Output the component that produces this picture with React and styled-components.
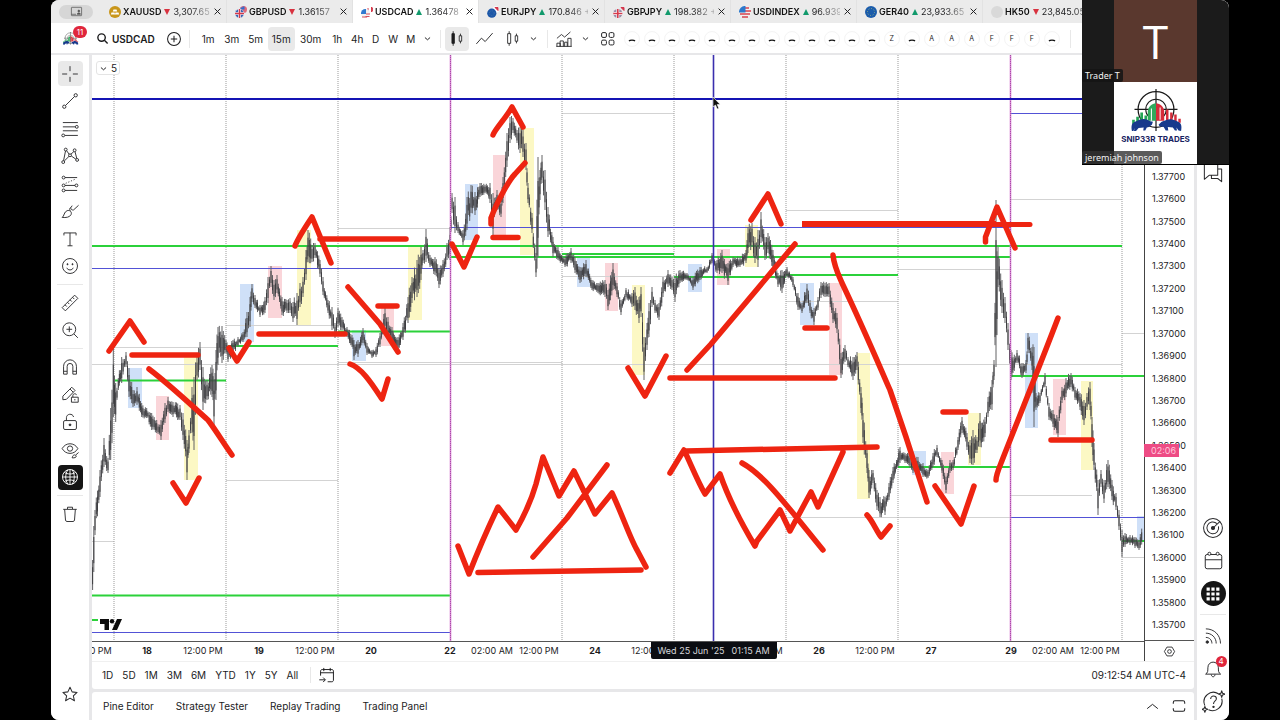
import React from "react";
import styled, { createGlobalStyle, css } from "styled-components";

const GlobalStyle = createGlobalStyle`
  *, *::before, *::after { box-sizing: border-box; }
  html, body { margin: 0; background: #000; }
  body { font-family: Inter, "Liberation Sans", sans-serif; font-size: 10px; color: #1c1c1e; }
  button { font: inherit; color: inherit; border: 0; padding: 0; background: none; cursor: pointer; }
  svg { display: block; flex: none; }
`;

const Screen = styled.div`
  min-height: 100vh;
  padding: 0 51px;
  display: flex;
`;

const Window = styled.main`
  position: relative;
  flex: 1;
  min-width: 0;
  display: flex;
  flex-direction: column;
  background: #e7e7e9;
  border-radius: 8px;
  overflow: hidden;
`;

/* ---------- symbol tabs ---------- */

const TabStrip = styled.nav`
  display: flex;
  align-items: center;
  height: 23px;
  background: #ebebeb;
  overflow: hidden;
`;

const LayoutButton = styled.button`
  flex: none;
  width: 34px;
  height: 14px;
  margin: 0 8px 0 8px;
  border-radius: 7px;
  background: #d6d6d6;
  color: #555;
  display: flex;
  align-items: center;
  justify-content: center;
`;

const Tab = styled.div`
  flex: none;
  display: flex;
  align-items: center;
  width: 126px;
  height: 23px;
  padding: 0 3px 0 8px;
  gap: 1px;
  border-right: 1px solid #e2e2e2;
  background: ${(p) => (p.$active ? "#fff" : "transparent")};
`;

const TabLink = styled.button`
  flex: 1;
  min-width: 0;
  display: flex;
  align-items: center;
  gap: 2px;
  white-space: nowrap;
  overflow: hidden;
  font-size: 9px;
  mask-image: linear-gradient(90deg, #000 80%, rgba(0, 0, 0, 0.3) 98%);
`;

const TabSymbol = styled.span`
  font-weight: 600;
  color: #111;
`;

const Trend = styled.span`
  width: 0;
  height: 0;
  margin: 0 1px;
  border: 3px solid transparent;
  ${(p) =>
    p.$up
      ? css`border-top: 0; border-bottom: 6px solid #129a6c;`
      : css`border-bottom: 0; border-top: 6px solid #d8323f;`}
`;

const CloseButton = styled.button`
  flex: none;
  width: 12px;
  height: 12px;
  display: flex;
  align-items: center;
  justify-content: center;
`;

/* ---------- top toolbar ---------- */

const Toolbar = styled.header`
  display: flex;
  align-items: center;
  height: 30px;
  margin-bottom: 2px;
  padding-top: 1px;
  background: #fff;
  overflow: hidden;
`;

const Profile = styled.button`
  position: relative;
  flex: none;
  width: 38px;
  height: 26px;
  display: flex;
  align-items: center;
  justify-content: center;
`;

const Badge = styled.span`
  position: absolute;
  top: 0;
  right: ${(p) => (p.$small ? "-1px" : "2px")};
  min-width: ${(p) => (p.$small ? "11px" : "14px")};
  height: ${(p) => (p.$small ? "11px" : "12px")};
  border-radius: 6px;
  background: #e0263c;
  color: #fff;
  font-size: 8px;
  line-height: ${(p) => (p.$small ? "11px" : "12px")};
  text-align: center;
`;

const SearchButton = styled.button`
  display: flex;
  align-items: center;
  gap: 3px;
  margin: 0 11px 0 7px;
  font-weight: 600;
`;

const ToolButton = styled.button`
  flex: none;
  display: flex;
  align-items: center;
  justify-content: center;
  width: ${(p) => p.$w || 24}px;
  height: 24px;
  border-radius: 4px;
  background: ${(p) => (p.$active ? "#e9e9e9" : "transparent")};
`;

const Divider = styled.span`
  flex: none;
  width: 1px;
  height: ${(p) => p.$h || 18}px;
  margin: 0 ${(p) => p.$m || 4}px;
  background: #e8e8e8;
`;

const Favourites = styled.div`
  display: flex;
  align-items: center;
  gap: 4px;
  margin-left: 4px;
`;

const Favourite = styled.button`
  flex: none;
  width: 16px;
  height: 16px;
  border-radius: 50%;
  border: 1px solid #f4f4f4;
  font-size: 7px;
  line-height: 12px;
`;

const DashFavourite = styled(Favourite)`
  display: flex;
  align-items: center;
  justify-content: center;
  padding-top: 3px;
`;

/* ---------- body ---------- */

const Body = styled.div`
  flex: 1;
  min-height: 0;
  display: flex;
  gap: 3px;
`;

const DrawingBar = styled.aside`
  flex: none;
  width: 38px;
  padding: 5px 0 14px;
  background: #fff;
  display: flex;
  flex-direction: column;
  align-items: center;
`;

const ToolGroup = styled.div`
  display: flex;
  flex-direction: column;
  height: ${(p) => p.$h}px;
`;

const ToolSlot = styled.div`
  flex: 1;
  display: flex;
  align-items: center;
  justify-content: center;
`;

const RailButton = styled.button`
  position: relative;
  width: 25px;
  height: 25px;
  border-radius: ${(p) => (p.$round ? "50%" : "4px")};
  display: flex;
  align-items: center;
  justify-content: center;
  color: ${(p) => (p.$tone === "dark" ? "#fff" : "#2a2a2c")};
  background: ${(p) =>
    p.$tone === "dark" ? "#151515" : p.$tone === "soft" ? "#e9e9e9" : "transparent"};
`;

const Rule = styled.span`
  flex: none;
  width: 26px;
  height: 1px;
  margin: 4px 0;
  background: #e8e8e8;
`;

const Spacer = styled.span`
  flex: 1;
`;

const Centre = styled.section`
  flex: 1;
  min-width: 0;
  display: flex;
  flex-direction: column;
  gap: 3px;
`;

const ChartPanel = styled.div`
  flex: 1;
  min-height: 0;
  display: flex;
  flex-direction: column;
  background: #fff;
  border-radius: 0 0 3px 3px;
`;

const ChartGrid = styled.div`
  flex: 1;
  min-height: 0;
  display: grid;
  grid-template-columns: minmax(0, 1fr) 50px;
  grid-template-rows: minmax(0, 1fr) 20px;
`;

const Plot = styled.div`
  position: relative;
  min-height: 0;
  svg.plot { position: absolute; inset: 0; width: 100%; height: 100%; }
`;

const LegendToggle = styled.button`
  position: absolute;
  left: 4px;
  top: 6px;
  height: 14px;
  width: 24px;
  display: flex;
  align-items: center;
  justify-content: center;
  gap: 3px;
  border: 1px solid #e4e4e4;
  border-radius: 3px;
  background: #fff;
`;

const BrandMark = styled.div`
  position: absolute;
  left: 8px;
  bottom: 10px;
`;

const PriceAxis = styled.div`
  position: relative;
  display: flex;
  flex-direction: column;
  padding: 110px 0 4px 7px;
  border-left: 1px solid #444;
  border-bottom: 1px solid #555;
  font-size: 9px;
`;

const Price = styled.span`
  flex: 1;
  display: flex;
  align-items: center;
`;

const Countdown = styled.span`
  position: absolute;
  left: -1px;
  top: 389px;
  width: 35px;
  height: 13px;
  padding-left: 7px;
  background: #ee4c85;
  color: #ffc9dc;
  line-height: 13px;
`;

const TimeAxis = styled.div`
  position: relative;
  overflow: hidden;
  border-top: 1px solid #555;
  font-size: 9px;
`;

const TimeTick = styled.span`
  position: absolute;
  top: 0;
  line-height: 18px;
  white-space: nowrap;
  transform: translateX(-50%);
  font-weight: ${(p) => (p.$day ? 700 : 400)};
`;

const TimeCursor = styled.span`
  position: absolute;
  top: 0;
  transform: translateX(-50%);
  display: flex;
  justify-content: center;
  gap: 7px;
  width: 126px;
  line-height: 17px;
  border-radius: 0 0 2px 2px;
  background: #0b0d12;
  color: #d8d8dc;
  white-space: nowrap;
`;

const AxisCorner = styled.div`
  border-left: 1px solid #444;
  display: flex;
  align-items: center;
  justify-content: center;
`;

const RangeBar = styled.div`
  display: flex;
  align-items: center;
  height: 28px;
  padding: 0 8px 1px 10px;
  border-top: 1px solid #f0f0f0;
`;

const Ranges = styled.div`
  display: flex;
  gap: 9px;
  margin-right: 8px;
`;

const PanelTabs = styled.footer`
  display: flex;
  align-items: center;
  gap: 22px;
  height: 28px;
  padding: 0 7px 0 11px;
  background: #fff;
  border-radius: 3px 3px 0 0;
`;

const PanelActions = styled.div`
  margin-left: auto;
  display: flex;
  gap: 11px;
`;

const Rail = styled.aside`
  flex: none;
  width: 32px;
  padding: 105px 0 2px;
  background: #fff;
  display: flex;
  flex-direction: column;
  align-items: center;
`;

/* ---------- call overlay ---------- */

const CallOverlay = styled.section`
  position: absolute;
  top: 0;
  right: 0;
  width: 147px;
  background: #1b1b1b;
  border-bottom: 1px solid #000;
`;

const Tile = styled.div`
  position: relative;
  height: 82px;
  display: flex;
  justify-content: center;
`;

const TileFace = styled.div`
  width: 83px;
  display: flex;
  flex-direction: column;
  align-items: center;
  justify-content: ${(p) => (p.$light ? "flex-start" : "center")};
  padding-top: ${(p) => (p.$light ? "7px" : "0")};
  background: ${(p) => (p.$light ? "#fff" : "#5a382e")};
  color: #fff;
  font: 400 46px/1 "Open Sans", sans-serif;
`;

const LogoName = styled.span`
  padding-top: 1px;
  font: 700 8px/12px Inter, sans-serif;
  color: #17235f;
`;

const NameTag = styled.span`
  position: absolute;
  left: 0;
  bottom: 0;
  padding: 0 3px;
  border-radius: 2px;
  background: ${(p) => (p.$light ? "rgba(50, 50, 50, 0.8)" : "rgba(20, 20, 20, 0.85)")};
  color: #f2f2f2;
  font: 400 9px/13px "Noto Sans", sans-serif;
`;

/* ---------- icons ---------- */

const icons = {
  cross: <path d="M14 3v7M14 18v7M3 14h7M18 14h7" />,
  trend: <><circle cx="6" cy="22" r="2.3" /><circle cx="22" cy="6" r="2.3" /><path d="M7.7 20.3 20.3 7.7" /></>,
  fib: <><path d="M4 5h21M4 11h17M4 16.500h21M7 23h18" /><circle cx="23.500" cy="11" r="2" /><circle cx="4.500" cy="23" r="2" /></>,
  pattern: <><circle cx="8" cy="5" r="2" /><circle cx="20.500" cy="6" r="2" /><circle cx="14" cy="13" r="2" /><circle cx="4.500" cy="22.500" r="2" /><circle cx="24" cy="19.500" r="2" /><path d="M7.700 7 5 20.500M9.200 6.500l3.600 5M19.500 7.700 15.200 11.500M21 8l2.500 9.500M12.600 14.500 6 21M15.800 14l6.500 4.500" /></>,
  forecast: <><circle cx="5" cy="5" r="2" /><circle cx="5" cy="16" r="2" /><circle cx="5" cy="23" r="2" /><circle cx="23" cy="16" r="2" /><path d="M7 5h17M7 16h14M7 23h17" /><path d="M8 13 22 7" strokeDasharray="1.500 2.500" /></>,
  brush: <path d="M3 23c3-1.500 2.500-8 7-9.500 4-1.200 7 2 5.500 5.500-1.800 4-7.500 4.500-12.500 4ZM14.500 13.500c-1.500-1.500-1-3.500.500-4.500 0 2.500 1.500 4 4 3.500L26 6M15.500 9l1.500-2.500" />,
  text: <path d="M5.500 9V5.500h17V9M14 5.500v18M10.500 23.500h7" />,
  smile: <><circle cx="14" cy="14" r="10.500" /><path d="M9.500 16.500c1.500 4 7.500 4 9 0" /><circle cx="10.500" cy="11.500" r=".8" fill="currentColor" /><circle cx="17.500" cy="11.500" r=".8" fill="currentColor" /></>,
  ruler: <path d="M3 20.500 20.500 3 25 7.500 7.500 25ZM7 16.500l2.500 2.500M10.500 13l2.500 2.500M14 9.500l2.500 2.500M17.500 6l2.500 2.500" />,
  zoom: <><circle cx="13" cy="13" r="9" /><path d="m19.500 19.500 5.500 5.500M9 13h8M13 9v8" /></>,
  magnet: <path d="M5 24V13a9 9 0 0 1 18 0v11h-5V13a4 4 0 0 0-8 0v11ZM5 20h5M18 20h5" />,
  pencilLock: <><path d="M4 22v-5L16.500 4.500l4.500 4.500L9 21.500ZM14 7l4.500 4.500" /><path d="M16 18.500h9.500v7H16ZM18 18.500V16c0-3 5-3 5-.5" /><path d="M20.800 21v2" /></>,
  lock: <><rect x="5" y="12" width="18" height="12.500" rx="2" /><path d="M9 12V8c0-6 9-6.500 10-1" /><circle cx="14" cy="18" r="1.300" fill="currentColor" /></>,
  eye: <><path d="M3 12c5-9 17-9 22 0-5 9-17 9-22 0Z" /><circle cx="14" cy="12" r="3.700" /><path d="M17 25c1-4 3-5 5-3.500s0 4-5 3.500ZM22 21l4-3.500" /></>,
  globe: <><circle cx="14" cy="14" r="10.500" /><path d="M3.500 14h21M14 3.500v21M6 7.500c4 3 12 3 16 0M6 20.500c4-3 12-3 16 0M11 4c-4 6-4 14 0 20M17 4c4 6 4 14 0 20" /></>,
  trash: <path d="M4.500 7.500h19M10.500 7V4.500h7V7M6.500 7.500l1.200 15c.1 1 .8 2 2 2h8.600c1.200 0 1.900-1 2-2l1.200-15" />,
  star: <path d="m14 3.500 3.300 7.200 7.700.8-5.800 5.300 1.700 7.700-6.900-4-6.900 4 1.700-7.700L3 11.500l7.700-.8Z" />,
  search: <><circle cx="12" cy="12" r="8" /><path d="m18 18 7 7" /></>,
  plus: <><circle cx="14" cy="14" r="10" /><path d="M9 14h10M14 9v10" /></>,
  chevron: <path d="m6 11 8 7 8-7" />,
  up: <path d="m4 18 10-8 10 8" />,
  bars: <><path d="M6.500 6h4v16h-4ZM8.500 2v24" fill="currentColor" /><path d="M18.500 9.500h4v9h-4ZM20.500 6v3.500M20.500 18.500V22" /></>,
  candles: <><path d="M6 6h5v16H6ZM8.500 2v4M8.500 22v4" /><path d="M18.500 9.500h4v9h-4ZM20.500 6v3.500M20.500 18.500V22" /></>,
  line: <path d="m2 22 7.500-8.500 5.500 5L26 6" />,
  indicators: <path d="M3 25.500v-5h5v5M8 25.500V17h5v8.500M15 25.500V19h4v6.500M20 25.500V13h5v12.500M2 25.500h24M3 13l7-6 5 4 9-8" />,
  grid: <><rect x="3" y="3" width="9" height="9" rx="2.500" /><rect x="17" y="3" width="9" height="9" rx="2.500" /><rect x="3" y="17" width="9" height="9" rx="2.500" /><rect x="17" y="17" width="9" height="9" rx="2.500" /></>,
  close: <path d="M5 5 23 23M23 5 5 23" />,
  screen: <><rect x="3" y="5" width="22" height="18" rx="1" /><path d="M3 20h10" /><circle cx="19" cy="13" r="2" fill="currentColor" /><path d="M15.500 20c0-4 7-4 7 0Z" fill="currentColor" /></>,
  chat: <path d="M3 3h17v14H9l-6 5ZM20 9h5v16l-5-4h-8v-4" />,
  radar: <><circle cx="14" cy="14" r="12" /><path d="M19 8.500a7.500 7.500 0 1 0 2 3.500" /><circle cx="14" cy="14" r="2" fill="currentColor" /><path d="m14 14 9-8.500" /></>,
  calendar: <><rect x="3" y="6" width="22" height="19" rx="2.500" /><path d="M3 13h22" /><circle cx="8.500" cy="5" r="2" fill="#fff" /><circle cx="19.500" cy="5" r="2" fill="#fff" /></>,
  apps: <path fill="currentColor" stroke="none" d="M4 4h5v5H4zM11.500 4h5v5h-5zM19 4h5v5h-5zM4 11.500h5v5H4zM11.500 11.500h5v5h-5zM19 11.500h5v5h-5zM4 19h5v5H4zM11.500 19h5v5h-5zM19 19h5v5h-5z" />,
  feed: <><circle cx="6" cy="22.500" r="1.700" fill="currentColor" /><path d="M4 16c5 0 8.500 3.500 8.500 8.500M4 10c8 0 14.500 6 14.500 14.500M4 4c12 0 20.500 9 20.500 20.500" /></>,
  bell: <path d="M3.500 21.500c3-2 3-4 3-8.500 0-10 14-10 14 0 0 4.500 0 6.500 3 8.500ZM11 22c.5 4 4.500 4 5 0" />,
  help: <><path d="M20 4.500A11.500 11.500 0 0 0 3.500 19M8 24a11.500 11.500 0 0 0 16-13.500" /><path d="M10.500 11c0-5 7-4.500 7-.5 0 3-3.500 2.500-3.500 6.500" /><circle cx="14" cy="20.500" r=".8" fill="currentColor" /><path d="m24 1 1 3 3 1-3 1-1 3-1-3-3-1 3-1ZM3.500 20l1 2.500 2.500 1-2.500 1-1 2.500-1-2.500-2.500-1 2.500-1Z" /></>,
  hexagon: <><path d="M8.500 4.500h11L25 14l-5.500 9.500h-11L3 14Z" /><circle cx="14" cy="14" r="4" /></>,
  goTo: <><path d="M4 15V8c0-1.500 1-2.500 2.500-2.500h15C23 5.500 24 6.500 24 8v14c0 1.500-1 2.500-2.500 2.500H15M4 10.500h20M9 3v5M19 3v5M2 21.500h9M8 18l3.500 3.500L8 25" /></>,
  expand: <path d="M4 10V8c0-2 1-3 3-3h14c2 0 3 1 3 3v2M4 18v2c0 2 1 3 3 3h14c2 0 3-1 3-3v-2" />,
};

const Icon = ({ name, size = 20, weight = 1.3 }) => (
  <svg
    width={size}
    height={size}
    viewBox="0 0 28 28"
    fill="none"
    stroke="currentColor"
    strokeWidth={weight}
    strokeLinejoin="round"
    aria-hidden="true"
  >
    {icons[name]}
  </svg>
);

const flags = {
  gold: <><circle cx="6" cy="6" r="6" fill="#c9961a" /><path d="M4.500 3.500h3l.7 2H3.800ZM2.500 6.500h3l.7 2H1.800ZM6.500 6.500h3l.7 2H5.800Z" fill="#fff" /></>,
  gbpusd: <><circle cx="8.500" cy="3.500" r="3.500" fill="#e06b7c" /><path d="M5.500 2.500h3v-2" stroke="#2f6ed0" strokeWidth="2" /><circle cx="4.500" cy="7.500" r="4.500" fill="#3767b5" stroke="#ebebeb" strokeWidth=".5" /><path d="M4.500 3v9M0 7.500h9" stroke="#fff" strokeWidth="2.600" /><path d="M4.500 3v9M0 7.500h9" stroke="#d63a4c" strokeWidth="1.400" /></>,
  usdcad: <><circle cx="9" cy="3.500" r="3.200" fill="#fff" /><path d="M10.500 1a3.200 3.200 0 0 1 0 5Z" fill="#d63a4c" stroke="#d63a4c" /><path d="M7 2v3" stroke="#d63a4c" /><circle cx="4.500" cy="7.500" r="4.500" fill="#f2f2f2" /><path d="M4.500 10.500h4M1 11h5M5 8h4" stroke="#d8505f" strokeWidth="1.200" /><path d="M0 8a4.500 4.500 0 0 1 5-5v5Z" fill="#2f7ad0" /></>,
  eurjpy: <><circle cx="9" cy="3.500" r="3.200" fill="#fff" /><path d="M8 1.500h3v3Z" fill="#d3344a" stroke="#d3344a" /><circle cx="4.800" cy="7.200" r="4.600" fill="#1d57a8" /><circle cx="4.800" cy="7.200" r="2.400" fill="none" stroke="#5a86a8" strokeDasharray=".6 1.200" strokeWidth=".7" /></>,
  gbpjpy: <><path d="M8 1.500h3v3Z" fill="#d3344a" stroke="#d3344a" /><circle cx="4.800" cy="7.500" r="4.500" fill="#9a8ba8" /><path d="M4.800 3v9M.3 7.500h9" stroke="#fff" strokeWidth="2.800" /><path d="M4.800 3v9M.3 7.500h9" stroke="#d63a4c" strokeWidth="1.600" /></>,
  us: <><circle cx="6" cy="6" r="6" fill="#f1f1f1" /><path d="M6 2h4M6 5h6M1 8h10M3 11h6" stroke="#d8414f" strokeWidth="1.500" /><path d="M0 6.500a6 6 0 0 1 6.500-6.500v6.500Z" fill="#2b78cc" /></>,
  eu: <><circle cx="6" cy="6" r="6" fill="#1b5cab" /><circle cx="6" cy="6" r="3.500" fill="none" stroke="#a4b77a" strokeWidth=".9" strokeDasharray=".9 1.800" /></>,
  blank: <circle cx="6" cy="6" r="6" fill="#d9d9d9" />,
};

const Flag = ({ name }) => (
  <svg width="12" height="12" viewBox="0 0 12 12" fill="none" aria-hidden="true">{flags[name]}</svg>
);

const SniperLogo = ({ size }) => (
  <svg width={size} height={Math.round(size * 0.7)} viewBox="0 0 60 42" fill="none" aria-hidden="true">
    <circle cx="30" cy="20" r="17.500" stroke="#1a1a1a" strokeWidth="1.200" />
    <circle cx="30" cy="20" r="10" stroke="#1a1a1a" />
    <path d="M30 0v41M9 20h42" stroke="#1a1a1a" strokeWidth="1.200" />
    <path d="M8 30v6M12 27v8M16 23v10M20 26v6" stroke="#23a455" strokeWidth="2.600" />
    <path d="M30 14c-4 0-8 4-8 8v9h8Z" fill="#2fa95c" />
    <path d="M30 14c4 0 8 4 8 8v9h-8Z" fill="#d62c3a" />
    <path d="M25.500 19v12M34 18v12" stroke="#fff" strokeWidth="1" />
    <path d="M41 20v11M45 23v9M49 25v7M53 29v4" stroke="#d62c3a" strokeWidth="2.400" />
    <path d="M6.500 41c-1-5 0-8 3-9 4-2 8-3.500 12-2l3 1.500 2.500.5-1 3-3 2-2 .500-1.500 3h-2l.5-3-5 .5-2.500 3h-2l.5-3-1 3Z" fill="#17398c" />
    <path d="M54.500 41c1-5 0-8-3-9-4-2.500-8-3.500-12-1.500l-4 1.500-3 3 1 1.500 4 .5 2 3.500h2.500l-.5-3.500 5 .5 2 3h2l-.5-3 2 3Z" fill="#17398c" />
  </svg>
);

/* ---------- chart data ---------- */

// [x, high, low] turning points of the price series
const swings = [
  [92.6,560,590],[93.8,526,572],[95,510,535],[100,470,497],[104,438,467],[108,458,473],[110.7,408,460],[113.3,348,417],[115.7,383,422],[118.3,378,390],[121.7,357,383],[126,352,367],[129,368,397],[133,390,407],[137,387,405],[141.7,403,417],[146.7,408,418],[151.7,413,430],[156.7,420,433],[161,420,440],[165,403,423],[168,397,412],[173,402,417],[180,405,420],[183,413,440],[187,440,480],[189,430,453],[192,387,433],[194,377,450],[197,357,380],[200,342,370],[203,367,410],[207,380,400],[212,365,397],[214,380,425],[216,350,400],[218,327,365],[222,326,363],[226,340,353],[228,347,362],
  [233,340,353],[238,337,347],[243,332,342],[247,312,337],[250,297,327],[252,284,302],[255,295,308],[260,305,317],[265,297,313],[268,277,303],[271,266,287],[274,280,300],[277,275,293],[282,297,315],[287,300,313],[290,298,313],[293,302,322],[297,293,325],[300,283,307],[303,277,297],[306,250,280],[308,230,262],[312,245,262],[315,243,258],[320,260,277],[323,277,295],[328,300,313],[332,307,330],[335,323,338],[338,308,327],[342,317,330],[347,327,337],[352,335,347],[354,340,360],[358,340,357],[363,328,343],[367,343,355],[372,350,358],[376,347,357],[380,333,347],[385,308,330],[388,317,337],[392,327,343],[398,337,350],[403,323,340],[408,297,323],[412,277,303],[417,260,297],[421,247,280],[423,250,263],[426,229,262],[430,255,267],[435,257,275],[439,268,288],[443,260,277],[447,243,260],[450,227,260],
  [452,193,213],[455,197,233],[458,222,233],[463,230,245],[467,197,230],[471,185,213],[475,192,215],[480,183,197],[485,185,193],[490,183,203],[493,193,237],[497,190,210],[501,200,217],[503,177,203],[507,133,167],[510,117,143],[513,118,133],[517,130,143],[520,127,153],[523,130,157],[526,143,170],[528,183,203],[532,213,233],[536,253,277],[538,157,257],[540,170,200],[542,155,183],[545,170,210],[548,207,237],[553,237,257],[558,247,260],[565,257,267],[571,248,263],[575,257,273],[580,267,283],[586,260,277],[592,280,290],[598,283,293],[605,280,297],[608,290,310],[613,263,290],[617,283,297],[621,300,315],[626,288,297],[632,293,307],[635,287,310],[639,297,323],[641,287,317],[644,337,380],[647,323,350],[649,303,337],[652,287,307],[655,300,313],[659,303,320],[663,277,297],[668,270,287],[672,277,290],[675,277,302],
  [680,270,283],[687,273,280],[693,277,290],[700,267,280],[707,267,273],[712,253,263],[717,260,273],[722,250,273],[728,263,285],[733,257,267],[740,257,267],[746,250,263],[748,227,253],[752,223,247],[755,237,263],[758,230,267],[761,212,243],[765,237,260],[768,233,253],[773,250,270],[778,273,287],[782,270,293],[787,267,277],[793,277,287],[798,293,310],[802,303,313],[807,284,303],[810,300,313],[814,308,325],[818,297,310],[821,282,298],[825,283,297],[829,283,297],[833,303,323],[837,313,333],[841,353,378],[845,345,362],[848,357,367],[853,357,380],[857,352,370],[861,387,413],[863,413,443],[867,447,473],[869,470,498],[873,470,483],[877,490,510],[880,497,517],[885,497,515],[889,483,500],[893,467,483],
  [900,447,463],[905,453,463],[910,455,468],[913,460,473],[918,457,473],[923,463,477],[928,470,478],[933,453,467],[937,445,457],[942,460,473],[946,477,493],[950,460,473],[953,460,470],[958,437,450],[962,417,433],[967,433,450],[970,440,463],[973,430,465],[977,437,453],[980,413,447],[985,417,437],[988,397,417],[992,380,410],[994,360,380],[996,200,367],[998,247,287],[1002,280,313],[1005,297,323],[1008,323,350],[1011,350,380],[1013,357,373],[1017,350,363],[1022,363,378],[1026,360,373],[1028,333,353],[1032,347,370],[1034,347,427],[1036,393,410],[1040,393,403],[1045,373,387],[1049,403,420],[1053,410,427],[1058,417,437],[1062,387,403],[1066,378,397],[1071,373,387],[1075,387,400],[1080,393,410],[1084,400,425],[1087,393,410],[1090,382,410],[1092,417,447],[1094,443,470],[1098,480,515],[1101,470,487],[1104,480,503],[1108,460,487],[1112,480,500],[1116,493,510],[1119,510,530],[1122,530,557],[1125,533,547],[1130,535,545],[1135,537,548],[1139,540,550],[1143,518,540],
];

function buildBars() {
  let seed = 7;
  const rand = () => {
    seed = (seed * 16807) % 2147483647;
    return seed / 2147483647;
  };
  let wicks = "";
  let bodies = "";
  for (let i = 0; i < swings.length - 1; i++) {
    const [x0, h0, l0] = swings[i];
    const [x1, h1, l1] = swings[i + 1];
    const steps = Math.max(1, Math.round((x1 - x0) / 1.25));
    for (let s = 0; s < steps; s++) {
      const t = s / steps;
      const x = x0 + (x1 - x0) * t;
      const high = h0 + (h1 - h0) * t;
      const low = l0 + (l1 - l0) * t;
      const span = low - high;
      const top = s === 0 ? high : high + span * (0.42 * rand() - 0.1);
      const bottom = s === 0 ? low : low - span * (0.42 * rand() - 0.1);
      wicks += `M${x.toFixed(1)} ${top.toFixed(1)}V${bottom.toFixed(1)}`;
      const inner = (bottom - top) * 0.24;
      bodies += `M${x.toFixed(1)} ${(top + inner).toFixed(1)}V${(bottom - inner * 0.8).toFixed(1)}`;
    }
  }
  return { wicks, bodies };
}
const bars = buildBars();

const BLUE = "#cfe0f8";
const PINK = "#fad5d9";
const YELLOW = "#fcf8c4";
// [colour, x1, y1, x2, y2]
const sessions = [
  [BLUE,128,368,142,408],[PINK,156,396,169,440],[YELLOW,184,357,198,480],
  [BLUE,240,284,254,342],[PINK,268,266,282,318],[YELLOW,297,230,311,325],
  [BLUE,352,330,366,361],[PINK,381,306,394,346],[YELLOW,408,247,422,320],
  [BLUE,465,184,478,240],[PINK,493,155,506,238],[YELLOW,520,128,534,255],
  [BLUE,577,258,590,287],[PINK,605,263,618,311],[YELLOW,632,285,645,375],
  [BLUE,688,264,702,292],[PINK,717,249,730,285],[YELLOW,745,225,758,267],
  [BLUE,800,283,814,325],[PINK,829,283,842,375],[YELLOW,857,353,870,499],
  [BLUE,912,451,926,475],[PINK,941,452,954,494],[YELLOW,968,413,981,465],
  [BLUE,1025,333,1038,428],[PINK,1053,379,1066,435],[YELLOW,1081,381,1093,470],
  [BLUE,1137,516,1144,541],
];

// [y, x1, x2]
const grayLevels = [[364.5,92,1122],[347.5,114,226],[325.5,226,338],[228.5,338,450],[362.5,338,562],[113.5,562,674],[276.5,562,674],[210.5,786,898],[301.5,786,898],[269.5,898,1010],[517.5,786,1010],[480.5,226,338],[541.5,92,114],[199.5,1010,1122],[495.5,1010,1092],[333.5,1122,1144],[557.5,1122,1144]];
const greenLevels = [[246,92,1122],[257,450,1010],[254,562,674],[277,674,786],[275,786,898],[380.5,114,226],[346,228,338],[331.5,338,450],[595.5,92,450],[620,92,98],[467,898,1010],[376,1010,1144],[541,1122,1144]];
const blueLevels = [[268.5,92,450],[632.5,92,450],[227.5,450,1010],[517.5,1010,1144],[113.5,1010,1144]];
const dayLines = [114, 226, 338, 562, 674, 786, 898, 1122];

const levelPath = (list) => list.map(([y, a, b]) => `M${a} ${y}H${b}`).join("");

const markup = [
  "M109 351 130 321 144 342", "M132 355H198", "M149 369C170 385 190 404 208 420 217 432 224 444 232 455",
  "M173 483 186 503 199 478", "M229 348 237 361 249 342", "M259 334H345",
  "M295 246C298 238 306 226 312 217L331 263", "M320 239H406", "M348 287 380 324 398 352", "M378 306H397",
  "M350 364C362 368 372 384 382 399L388 379", "M452 244 464 267 477 237", "M493 237.500H518",
  "M491 224V218C497 202 509 180 515 174L525 163", "M493 135C495 129 506 118 512 107L523 127",
  "M628 368 645 396 666 356", "M670 378H835", "M687 370 711 344 795 244",
  "M751 220 768 194 781 224", "M833 255C834 266 838 274 842 283C862 325 876 358 890 390L906 437 927 502",
  "M805 328H827", "M985.500 242V237L997 207 1015 248", "M943 412H966",
  "M935 486 961 524 974 486", "M867 515C872 520 876 530 881 537L890 526",
  "M996 480C996 474 1000 466 1003 458C1022 410 1042 360 1058 318", "M1051 440H1092",
  "M458 546 469 574C479 548 487 530 498 507L516 530C524 516 532 498 536 484L543 457 559 496 574 471 595 514 612 493C622 514 630 538 637 550L646 567",
  "M478 572.500 641 570", "M533 557 567 518 607 465",
  "M670 473 684 450C690 462 697 480 705 494L720 474C729 500 743 526 755 546L757 541 780 510 790 531 811 492 818 507 843 452",
  "M686 451 877 447", "M742 463C766 476 790 510 823 550",
].join("");

const PriceChart = () => (
  <svg className="plot" viewBox="92 55 1052 586" preserveAspectRatio="none" fill="none" role="img" aria-label="USDCAD 15 minute price chart">
    {sessions.map(([fill, x1, y1, x2, y2]) => (
      <rect key={`${x1}-${y1}`} x={x1} y={y1} width={x2 - x1} height={y2 - y1} fill={fill} />
    ))}
    <path d={levelPath(grayLevels)} stroke="#d3d3d3" />
    <path d={dayLines.map((x) => `M${x} 55V641`).join("")} stroke="#9b9b9b" strokeDasharray="1 1" />
    <path d={levelPath(greenLevels)} stroke="#2bd13a" strokeWidth="1.800" />
    <path d={levelPath(blueLevels)} stroke="#5252d6" />
    <path d={bars.wicks} stroke="#626265" strokeWidth="1" />
    <path d={bars.bodies} stroke="#3a3a3d" strokeWidth=".9" />
    <path d="M450.500 55V641M1010.500 55V641" stroke="#d77fd2" strokeWidth="1.600" />
    <path d="M450.500 55V641M1010.500 55V641" stroke="#a850a6" strokeDasharray="1 1" />
    <path d="M92 99H1144" stroke="#1414b4" strokeWidth="2" />
    <path d="M713.500 55V641" stroke="#3a2fae" strokeWidth="1.600" />
    <path d={markup} stroke="#ee2411" strokeWidth="5.500" strokeLinecap="round" strokeLinejoin="round" />
    <path d="M802 224H996" stroke="#ee2411" strokeWidth="6" />
    <path d="M996 224.500H1030" stroke="#ee2411" strokeWidth="5" strokeLinecap="round" />
    <path d="M713 97v10l2.500-2 1.700 4 1.600-.8-1.600-3.700h3Z" fill="#111" stroke="#fff" strokeWidth=".6" />
  </svg>
);

/* ---------- content ---------- */

const tabs = [
  ["gold", "XAUUSD", false, "3,307.65"],
  ["gbpusd", "GBPUSD", false, "1.36157"],
  ["usdcad", "USDCAD", true, "1.36478"],
  ["eurjpy", "EURJPY", true, "170.846 +"],
  ["gbpjpy", "GBPJPY", true, "198.382 +"],
  ["us", "USDINDEX", true, "96.939"],
  ["eu", "GER40", true, "23,933.65"],
  ["blank", "HK50", false, "23,845.05"],
];

const intervals = [["1m", 23], ["3m", 24], ["5m", 24], ["15m", 27], ["30m", 32], ["1h", 21], ["4h", 19], ["D", 18], ["W", 17], ["M", 18]];
const favourites = ["", "", "", "", "", "", "", "", "", "", "", "", "", "Z", "", "A", "A", "A", "F", "F", "F", ""];

const drawingGroups = [
  [220, ["cross", "trend", "fib", "pattern", "forecast", "brush", "text", "smile"]],
  [55, ["ruler", "zoom"]],
  [138, ["magnet", "pencilLock", "lock", "eye", "globe"]],
  [28, ["trash"]],
];

const prices = Array.from({ length: 21 }, (_, i) => (1.377 - i * 0.001).toFixed(5));

const ticks = [
  [92, "12:00 PM"], [147, "18", 1], [203, "12:00 PM"], [259, "19", 1], [315, "12:00 PM"], [371, "20", 1],
  [450, "22", 1], [492, "02:00 AM"], [539, "12:00 PM"], [595, "24", 1], [651, "12:00 PM"], [763, "12:00 PM"],
  [819, "26", 1], [875, "12:00 PM"], [931, "27", 1], [1011, "29", 1], [1053, "02:00 AM"], [1100, "12:00 PM"],
];
const axisPosition = (x) => ({ left: `${((x - 92) / 1052) * 100}%` });

const ranges = ["1D", "5D", "1M", "3M", "6M", "YTD", "1Y", "5Y", "All"];
const panels = ["Pine Editor", "Strategy Tester", "Replay Trading", "Trading Panel"];

const Dash = () => (
  <svg width="8" height="4" viewBox="0 0 8 4" aria-hidden="true">
    <path d="M1 3C2 1.800 6 1.800 7 3" fill="none" stroke="#111" strokeWidth="1.300" />
  </svg>
);

export default function App() {
  return (
    <>
      <GlobalStyle />
      <Screen>
        <Window>
          <TabStrip aria-label="Symbols">
            <LayoutButton aria-label="Layouts"><Icon name="screen" size={13} weight={1.6} /></LayoutButton>
            {tabs.map(([flag, symbol, up, price]) => (
              <Tab key={symbol} $active={symbol === "USDCAD"}>
                <TabLink>
                  <Flag name={flag} />
                  <TabSymbol>{symbol}</TabSymbol>
                  <Trend $up={up} />
                  <span>{price}</span>
                </TabLink>
                <CloseButton aria-label={`Close ${symbol}`}><Icon name="close" size={9} weight={3} /></CloseButton>
              </Tab>
            ))}
          </TabStrip>

          <Toolbar>
            <Profile aria-label="Profile">
              <SniperLogo size={19} />
              <Badge>11</Badge>
            </Profile>
            <SearchButton><Icon name="search" size={13} weight={3} />USDCAD</SearchButton>
            <ToolButton $w={16} aria-label="Compare"><Icon name="plus" size={18} weight={1.6} /></ToolButton>
            <Divider $m={7} />
            {intervals.map(([label, width]) => (
              <ToolButton key={label} $w={width} $active={label === "15m"}>{label}</ToolButton>
            ))}
            <ToolButton $w={16} aria-label="More intervals"><Icon name="chevron" size={9} weight={3} /></ToolButton>
            <Divider />
            <ToolButton $active aria-label="Bars"><Icon name="bars" size={17} weight={1.4} /></ToolButton>
            <ToolButton $w={32} aria-label="Line"><Icon name="line" size={19} /></ToolButton>
            <ToolButton aria-label="Candles"><Icon name="candles" size={17} weight={1.4} /></ToolButton>
            <ToolButton $w={18} aria-label="More chart types"><Icon name="chevron" size={9} weight={3} /></ToolButton>
            <Divider />
            <ToolButton aria-label="Indicators"><Icon name="indicators" size={18} /></ToolButton>
            <ToolButton $w={20} aria-label="Favourite indicators"><Icon name="chevron" size={9} weight={3} /></ToolButton>
            <ToolButton aria-label="Templates"><Icon name="grid" size={15} weight={1.8} /></ToolButton>
            <Favourites>
              {favourites.map((label, i) =>
                label ? (
                  <Favourite key={i}>{label}</Favourite>
                ) : (
                  <DashFavourite key={i} aria-label={`Favourite ${i + 1}`}><Dash /></DashFavourite>
                )
              )}
            </Favourites>
            <Divider $m={10} />
          </Toolbar>

          <Body>
            <DrawingBar aria-label="Drawing tools">
              {drawingGroups.map(([height, names], i) => (
                <React.Fragment key={height}>
                  {i > 0 && <Rule />}
                  <ToolGroup $h={height}>
                    {names.map((name) => (
                      <ToolSlot key={name}>
                        <RailButton
                          aria-label={name}
                          $tone={name === "cross" ? "soft" : name === "globe" ? "dark" : undefined}
                        >
                          <Icon name={name} />
                        </RailButton>
                      </ToolSlot>
                    ))}
                  </ToolGroup>
                </React.Fragment>
              ))}
              <Spacer />
              <RailButton aria-label="Favourite tools"><Icon name="star" size={18} weight={1.6} /></RailButton>
            </DrawingBar>

            <Centre>
              <ChartPanel>
                <ChartGrid>
                  <Plot>
                    <PriceChart />
                    <LegendToggle><Icon name="chevron" size={9} weight={3} />5</LegendToggle>
                    <BrandMark>
                      <svg width="22" height="12" viewBox="0 0 22 12" fill="#0c0c0c" role="img" aria-label="TradingView">
                        <path d="M0 0h9v11H4.500V5H0Z" />
                        <circle cx="12" cy="2.200" r="2.200" />
                        <path d="M17 0h5l-5 11h-5Z" />
                      </svg>
                    </BrandMark>
                  </Plot>
                  <PriceAxis>
                    {prices.map((p) => <Price key={p}>{p}</Price>)}
                    <Countdown>02:06</Countdown>
                  </PriceAxis>
                  <TimeAxis>
                    {ticks.map(([x, label, day]) => (
                      <TimeTick key={x} $day={day} style={axisPosition(x)}>{label}</TimeTick>
                    ))}
                    <TimeCursor style={axisPosition(713.5)}><span>Wed 25 Jun '25</span><span>01:15 AM</span></TimeCursor>
                  </TimeAxis>
                  <AxisCorner><Icon name="hexagon" size={13} weight={1.8} /></AxisCorner>
                </ChartGrid>
                <RangeBar>
                  <Ranges>{ranges.map((r) => <button key={r}>{r}</button>)}</Ranges>
                  <Divider $h={16} />
                  <ToolButton aria-label="Go to date"><Icon name="goTo" size={18} weight={1.5} /></ToolButton>
                  <Spacer />
                  <button>09:12:54 AM UTC-4</button>
                </RangeBar>
              </ChartPanel>
              <PanelTabs>
                {panels.map((p) => <button key={p}>{p}</button>)}
                <PanelActions>
                  <button aria-label="Open panel"><Icon name="up" size={15} weight={1.8} /></button>
                  <button aria-label="Maximize panel"><Icon name="expand" size={16} weight={1.8} /></button>
                </PanelActions>
              </PanelTabs>
            </Centre>

            <Rail aria-label="Panels">
              <RailButton aria-label="Chats"><Icon name="chat" size={22} /></RailButton>
              <Spacer />
              <ToolGroup $h={99}>
                <ToolSlot><RailButton aria-label="Screeners"><Icon name="radar" size={22} /></RailButton></ToolSlot>
                <ToolSlot><RailButton aria-label="Calendar"><Icon name="calendar" size={21} /></RailButton></ToolSlot>
                <ToolSlot><RailButton $tone="dark" $round aria-label="Products"><Icon name="apps" size={18} /></RailButton></ToolSlot>
              </ToolGroup>
              <Rule />
              <ToolGroup $h={99}>
                <ToolSlot><RailButton aria-label="Streams"><Icon name="feed" size={20} /></RailButton></ToolSlot>
                <ToolSlot>
                  <RailButton aria-label="Notifications"><Icon name="bell" size={21} /><Badge $small>4</Badge></RailButton>
                </ToolSlot>
                <ToolSlot><RailButton aria-label="Help"><Icon name="help" size={23} /></RailButton></ToolSlot>
              </ToolGroup>
            </Rail>
          </Body>

          <CallOverlay aria-label="Call participants">
            <Tile>
              <TileFace>T</TileFace>
              <NameTag>Trader T</NameTag>
            </Tile>
            <Tile>
              <TileFace $light>
                <SniperLogo size={62} />
                <LogoName>SNIP33R TRADES</LogoName>
              </TileFace>
              <NameTag $light>jeremiah johnson</NameTag>
            </Tile>
          </CallOverlay>
        </Window>
      </Screen>
    </>
  );
}
